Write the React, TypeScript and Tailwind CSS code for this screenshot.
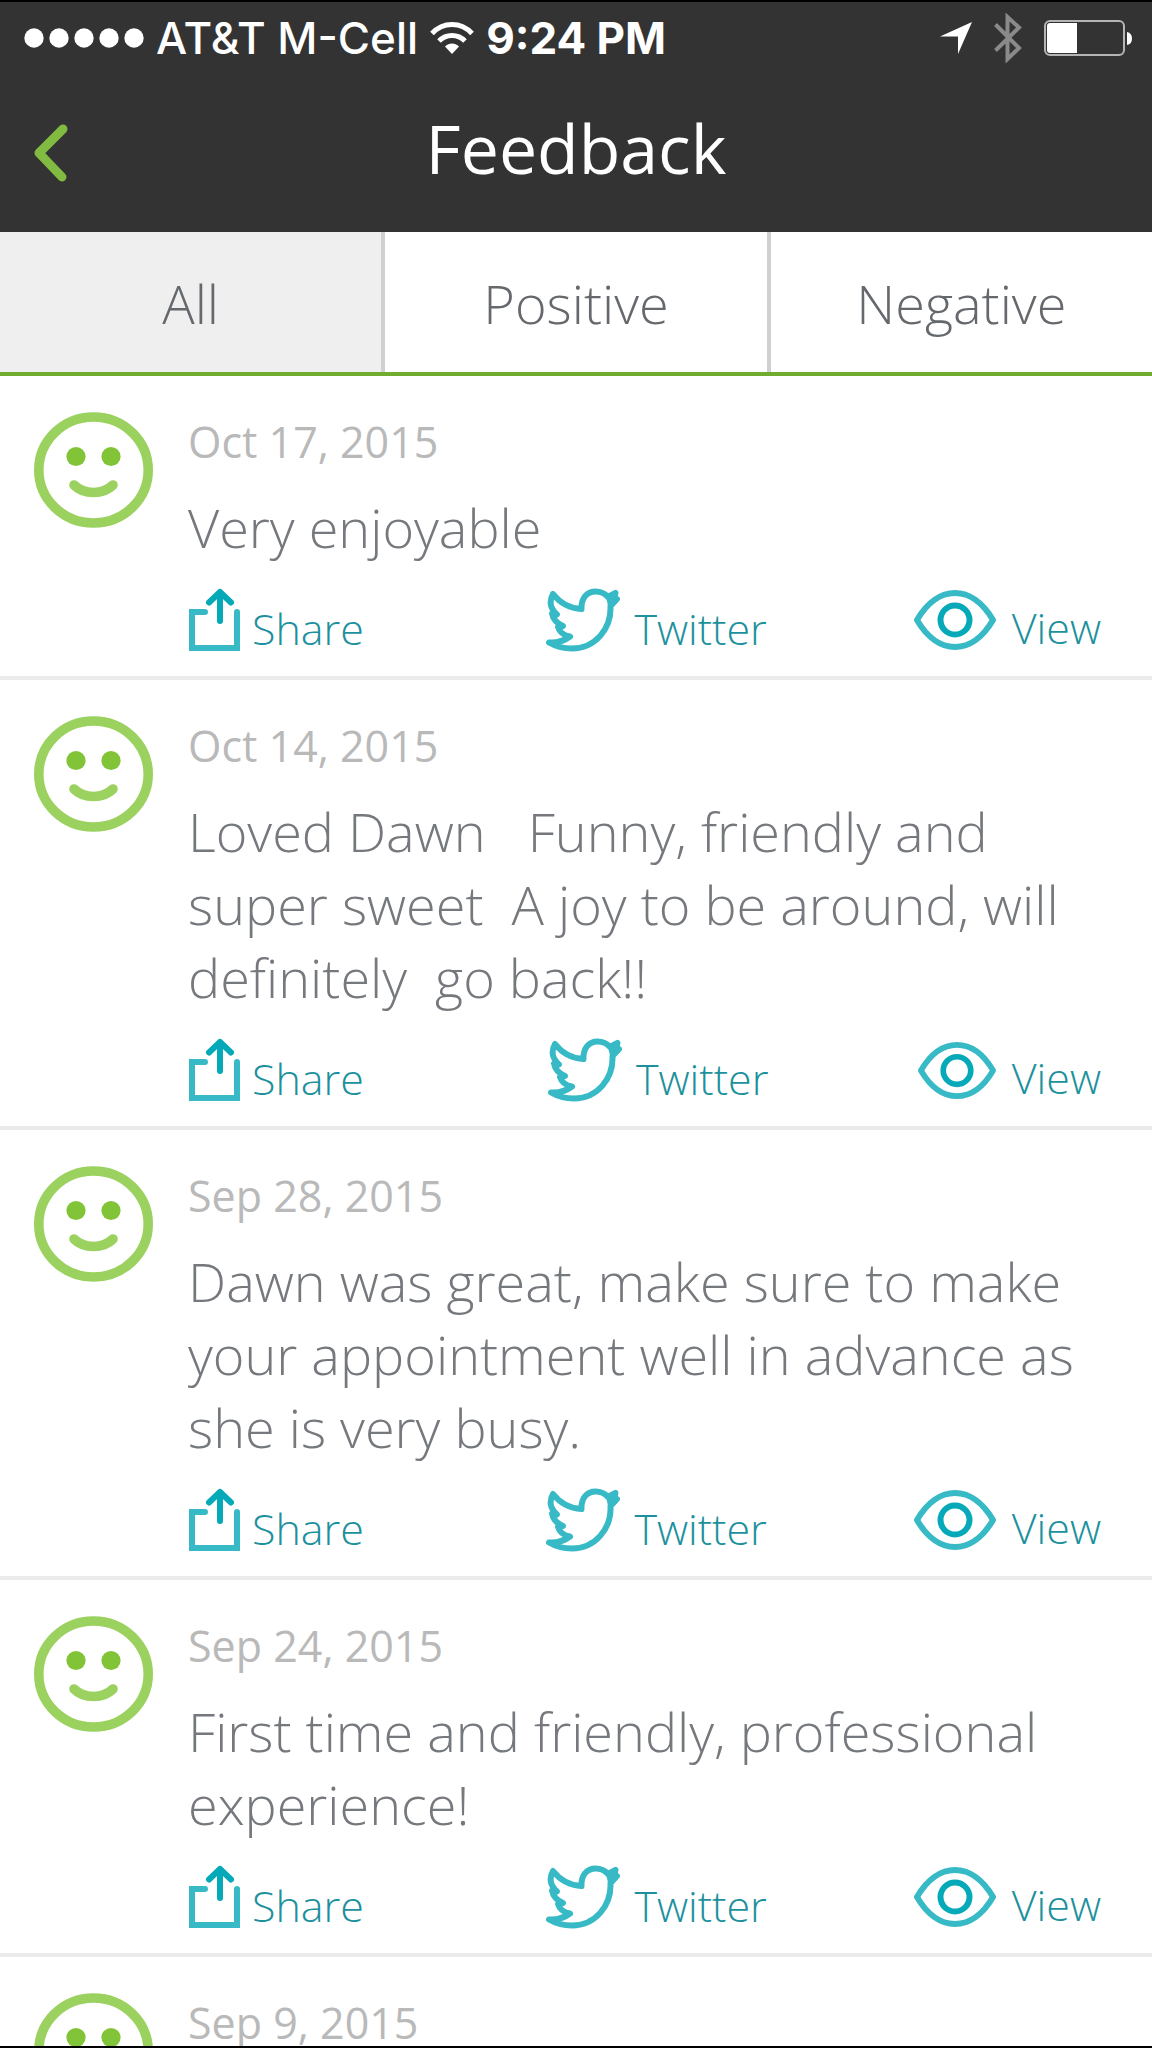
import { useState } from 'react';

const tabs = ['All', 'Positive', 'Negative'];

const reviews = [
  { id: 1, date: 'Oct 17, 2015', text: 'Very enjoyable' },
  { id: 2, date: 'Oct 14, 2015', text: 'Loved Dawn   Funny, friendly and super sweet  A joy to be around, will definitely  go back!!', smallEye: true },
  { id: 3, date: 'Sep 28, 2015', text: 'Dawn was great, make sure to make your appointment well in advance as she is very busy.' },
  { id: 4, date: 'Sep 24, 2015', text: 'First time and friendly, professional experience!' },
  { id: 5, date: 'Sep 9, 2015' },
];

function StatusBar() {
  return (
    <div className="flex h-20 items-start justify-between pl-6 pr-5 pt-[11px] font-['Inter',sans-serif] text-[44px] leading-[50px] text-white">
      <div className="flex items-center">
        <svg width="120" height="20" viewBox="0 0 120 20" fill="currentColor" className="mr-3">
          {[10, 35, 60, 85, 110].map((x) => (
            <circle key={x} cx={x} cy="10" r="9.7" />
          ))}
        </svg>
        <span className="font-medium">AT&amp;T M-Cell</span>
        <svg width="44" height="34" viewBox="0 0 44 34" className="mx-3" fill="none" stroke="currentColor" strokeWidth="5">
          <path d="M2 12.5C13 0.5 31 0.5 42 12.5" />
          <path d="M9 20C16 12.5 28 12.5 35 20" />
          <path d="M22 33L15 25.5C19 21.5 25 21.5 29 25.5Z" fill="currentColor" stroke="none" />
        </svg>
        <span className="font-bold">9:24 PM</span>
      </div>
      <div className="flex items-center">
        <svg width="32" height="32" viewBox="0 0 32 32" fill="currentColor">
          <path d="M32 0L18 32V14.5H0Z" />
        </svg>
        <svg width="28" height="50" viewBox="0 0 28 50" className="ml-[22px] text-[#8a8a8a]" fill="none" stroke="currentColor" strokeWidth="4">
          <path d="M1.5 11.5L25 35L13.5 46V4L25 14.5L1.5 37.5" />
        </svg>
        <svg width="88" height="36" viewBox="0 0 88 36" className="ml-[22px]">
          <rect x="1" y="1" width="79" height="34" rx="5" fill="none" stroke="#b5b5b5" strokeWidth="2" />
          <path d="M6 3H33V33H6Q3 33 3 30V6Q3 3 6 3Z" fill="#fff" />
          <path d="M83 12Q88 13 88 18.5Q88 24 83 25Z" fill="#fff" />
        </svg>
      </div>
    </div>
  );
}

function SmileIcon() {
  return (
    <svg width="119" height="116" viewBox="0 0 119 116" className="shrink-0">
      <ellipse cx="59.5" cy="58" rx="54.7" ry="53" fill="none" stroke="#9bd15f" strokeWidth="9.6" />
      <circle cx="42" cy="44.5" r="9.6" fill="#82c437" />
      <circle cx="77" cy="44.5" r="9.6" fill="#82c437" />
      <path d="M40 73C50 83 69 83 79 73" fill="none" stroke="#9bd15f" strokeWidth="9.6" strokeLinecap="round" />
    </svg>
  );
}

function ShareIcon() {
  return (
    <svg width="52" height="64" viewBox="0 0 52 64" fill="none" strokeWidth="6">
      <path d="M17 24H4V60H49V24" stroke="#37bac6" strokeLinecap="round" />
      <path d="M32 33V4M21 14.5L32 4L43 14.5" stroke="#05a9b8" strokeLinecap="round" strokeLinejoin="round" />
    </svg>
  );
}

function TwitterIcon() {
  return (
    <svg width="76" height="64" viewBox="0 0 76 64" fill="none" stroke="#37bac6" strokeWidth="6" strokeLinejoin="round" strokeLinecap="round">
      <path d="M7 6C14 15 24 20.5 35.500 21C35 10 41 3.500 49.500 3.500C55 3.500 59 5.500 62 9L69.500 5L68 10L71 11L64.500 18C65.500 41 49 60.500 26 60.500C17 60.500 9 58 3 54.500C11 55 18 53 24 48.500C18 47.500 13.500 44 12 39L17 38C10 35 7 31 6 25.500L11 26.500C4 20.500 3 13 7 6Z" />
      <path d="M63 9L69 7L69 13L65 17Z" fill="#37bac6" />
    </svg>
  );
}

function ViewIcon({ small }) {
  return (
    <svg width={small ? 78 : 82} height={small ? 57 : 60} viewBox="0 0 82 60" fill="none">
      <path d="M3 30C24 -6 58 -6 79 30C58 66 24 66 3 30Z" stroke="#37bac6" strokeWidth="6" strokeLinejoin="round" />
      <circle cx="41" cy="30" r="14.5" stroke="#05a9b8" strokeWidth="6" />
    </svg>
  );
}

function ReviewRow({ review }) {
  return (
    <li className="flex gap-[35px] border-b-4 border-[#ebebeb] pb-6 pl-[34px] pr-[51px] pt-9">
      <SmileIcon />
      <div className="min-w-0 flex-1">
        <time className="block text-[43px] leading-[60px] text-[#b9b9b9]">{review.date}</time>
        {review.text && (
          <>
            <p className="mt-[19px] whitespace-pre-wrap text-[54px] font-light leading-[73px] text-[#75787c]">{review.text}</p>
            <div className="mt-6 grid grid-cols-[360fr_369fr_184fr] text-[43px] font-light leading-[60px] text-[#1c919d]">
              <button className="flex h-16 items-center gap-3">
                <ShareIcon />
                <span className="pt-[18px]">Share</span>
              </button>
              <button className="flex h-16 items-center gap-3">
                <TwitterIcon />
                <span className="pt-[18px]">Twitter</span>
              </button>
              <button className="flex h-16 items-center justify-end gap-4">
                <ViewIcon small={review.smallEye} />
                <span className="pt-4">View</span>
              </button>
            </div>
          </>
        )}
      </div>
    </li>
  );
}

export default function App() {
  const [activeTab, setActiveTab] = useState('All');

  return (
    <div className="flex h-screen flex-col overflow-hidden border-y-2 border-black bg-white font-['Open_Sans',sans-serif]">
      <header className="shrink-0 bg-[#333333]">
        <StatusBar />
        <div className="grid h-[150px] grid-cols-[1fr_auto_1fr] items-start px-8">
          <button aria-label="Back" className="mt-10 justify-self-start">
            <svg width="36" height="60" viewBox="0 0 36 60" fill="none" stroke="#82bb41" strokeWidth="9" strokeLinecap="round" strokeLinejoin="round">
              <path d="M31 7L7 31L30 55" />
            </svg>
          </button>
          <h1 className="mt-5 text-[68px] leading-[92px] text-white">Feedback</h1>
        </div>
      </header>
      <nav className="flex shrink-0 border-b-4 border-[#6fac30]">
        {tabs.map((tab) => (
          <button
            key={tab}
            onClick={() => setActiveTab(tab)}
            className={`box-content h-[138px] flex-1 border-r-4 border-[#d0d0d0] pt-0.5 text-[54px] font-light text-[#65686c] last:border-r-0 ${activeTab === tab ? 'bg-[#efefef]' : 'bg-white'}`}
          >
            {tab}
          </button>
        ))}
      </nav>
      <ul className="min-h-0 flex-1 overflow-hidden">
        {reviews.map((review) => (
          <ReviewRow key={review.id} review={review} />
        ))}
      </ul>
    </div>
  );
}
